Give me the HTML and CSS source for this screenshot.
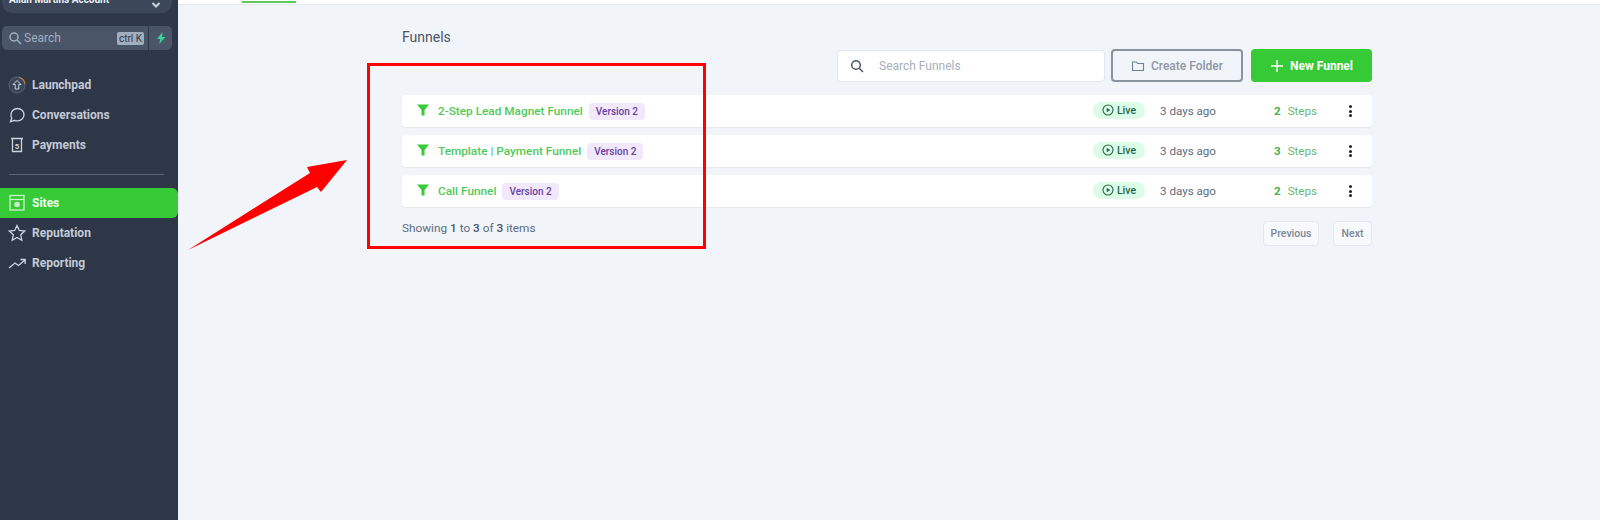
FILE: index.html
```html
<!DOCTYPE html>
<html lang="en">
<head>
<meta charset="utf-8">
<title>Funnels</title>
<link rel="stylesheet" href="styles.css">
</head>
<body>
<div class="app">
  <aside class="sidebar">
    <div class="account"><span class="account-name">Allan Martins Account</span>
      <svg class="chev" width="10" height="10" viewBox="0 0 10 10"><path d="M1.500 3 5 6.500 8.500 3" fill="none" stroke="#cbd5e0" stroke-width="2"/></svg>
    </div>
    <div class="search-row">
      <div class="side-search">
        <svg width="14" height="14" viewBox="0 0 14 14"><circle cx="6" cy="6" r="4" fill="none" stroke="#a0aec0" stroke-width="1.500"/><path d="m9 9 4 4" stroke="#a0aec0" stroke-width="1.500"/></svg>
        <span class="side-search-text">Search</span>
        <span class="kbd">ctrl K</span>
      </div>
      <div class="bolt"><svg width="14" height="14" viewBox="0 0 14 14"><path d="M8.500 1 3 8h3.200l-1 5L11.500 6H8z" fill="#34d399"/></svg></div>
    </div>
    <nav class="nav nav-top">
      <a class="nav-item"><svg width="24" height="24" viewBox="0 0 24 24"><circle cx="12" cy="12" r="8" fill="#3b4658" stroke="#56617a" stroke-width="1"/><path d="M14 4.300A8 8 0 0 1 20 11" fill="none" stroke="#c77a3f" stroke-width="1.200"/><path d="M12 7.500 8 11.500h2.200V16h3.600v-4.500H16z" fill="none" stroke="#cbd5e0" stroke-width="1"/></svg><span>Launchpad</span></a>
      <a class="nav-item"><svg width="24" height="24" viewBox="0 0 24 24"><path d="M12.500 5.500c3.600 0 6.500 2.800 6.500 6.200s-2.900 6.200-6.500 6.200c-1 0-2-.2-2.800-.6L5.500 18.800l1.200-3.600C6.200 14.100 6 12.900 6 11.700c0-3.400 2.900-6.200 6.500-6.200z" fill="none" stroke="#cbd5e0" stroke-width="1.300"/></svg><span>Conversations</span></a>
      <a class="nav-item"><svg width="24" height="24" viewBox="0 0 24 24"><path d="M6 5.500h12M7.500 5.500v13h9v-13" fill="none" stroke="#cbd5e0" stroke-width="1.300"/><text x="12" y="15.500" font-size="8" font-weight="700" text-anchor="middle" fill="#cbd5e0" font-family="Roboto, sans-serif">5</text></svg><span>Payments</span></a>
    </nav>
    <div class="divider"></div>
    <nav class="nav">
      <a class="nav-item active"><svg width="24" height="24" viewBox="0 0 24 24"><rect x="5" y="4.500" width="14" height="14.500" fill="none" stroke="#c9f2c9" stroke-width="1.300"/><path d="M5 8.500h14" stroke="#c9f2c9" stroke-width="1.300"/><circle cx="12" cy="13.500" r="2.800" fill="#c9f2c9"/></svg><span>Sites</span></a>
      <a class="nav-item"><svg width="24" height="24" viewBox="0 0 24 24"><path d="m12 4.500 2.300 5 5.400.6-4 3.700 1.100 5.400-4.800-2.700-4.800 2.700 1.100-5.400-4-3.700 5.400-.6z" fill="none" stroke="#cbd5e0" stroke-width="1.300"/></svg><span>Reputation</span></a>
      <a class="nav-item"><svg width="24" height="24" viewBox="0 0 24 24"><path d="m4 17 6-5 3.500 2.500L20 9M15.500 8.500H20.200V13" fill="none" stroke="#cbd5e0" stroke-width="1.300"/></svg><span>Reporting</span></a>
    </nav>
  </aside>
  <main class="main">
    <div class="topbar"><span class="tab-line"></span></div>
    <section class="content">
      <h1 class="title">Funnels</h1>
      <div class="toolbar">
        <div class="search">
          <svg width="14" height="14" viewBox="0 0 14 14"><circle cx="6" cy="6" r="4.300" fill="none" stroke="#4a5568" stroke-width="1.500"/><path d="m9.200 9.200 3.800 3.800" stroke="#4a5568" stroke-width="1.500"/></svg>
          <span>Search Funnels</span>
        </div>
        <button class="btn-folder"><svg width="14" height="14" viewBox="0 0 14 14"><path d="M1.500 3h4l1.200 1.500h5.800v7h-11z" fill="none" stroke="#718096" stroke-width="1.100"/></svg>Create Folder</button>
        <button class="btn-new"><svg width="14" height="14" viewBox="0 0 14 14"><path d="M7 1v12M1 7h12" stroke="#fff" stroke-width="1.500"/></svg>New Funnel</button>
      </div>
      <div class="rows">
        <div class="row">
          <svg class="funnel" width="14" height="14" viewBox="0 0 14 14"><path d="M1 1.500h12L8.500 7v5.500h-3V7z" fill="#37ca37"/></svg>
          <a class="name">2-Step Lead Magnet Funnel</a><span class="version">Version 2</span>
          <span class="live"><svg width="12" height="12" viewBox="0 0 12 12"><circle cx="6" cy="6" r="5" fill="none" stroke="#276749" stroke-width="1.100"/><path d="M4.700 3.800v4.400L8.200 6z" fill="#276749"/></svg>Live</span>
          <span class="date">3 days ago</span>
          <span class="steps"><b>2</b>Steps</span>
          <span class="dots"><i></i><i></i><i></i></span>
        </div>
        <div class="row">
          <svg class="funnel" width="14" height="14" viewBox="0 0 14 14"><path d="M1 1.500h12L8.500 7v5.500h-3V7z" fill="#37ca37"/></svg>
          <a class="name">Template | Payment Funnel</a><span class="version">Version 2</span>
          <span class="live"><svg width="12" height="12" viewBox="0 0 12 12"><circle cx="6" cy="6" r="5" fill="none" stroke="#276749" stroke-width="1.100"/><path d="M4.700 3.800v4.400L8.200 6z" fill="#276749"/></svg>Live</span>
          <span class="date">3 days ago</span>
          <span class="steps"><b>3</b>Steps</span>
          <span class="dots"><i></i><i></i><i></i></span>
        </div>
        <div class="row">
          <svg class="funnel" width="14" height="14" viewBox="0 0 14 14"><path d="M1 1.500h12L8.500 7v5.500h-3V7z" fill="#37ca37"/></svg>
          <a class="name">Call Funnel</a><span class="version">Version 2</span>
          <span class="live"><svg width="12" height="12" viewBox="0 0 12 12"><circle cx="6" cy="6" r="5" fill="none" stroke="#276749" stroke-width="1.100"/><path d="M4.700 3.800v4.400L8.200 6z" fill="#276749"/></svg>Live</span>
          <span class="date">3 days ago</span>
          <span class="steps"><b>2</b>Steps</span>
          <span class="dots"><i></i><i></i><i></i></span>
        </div>
      </div>
      <div class="foot">
        <span class="showing">Showing <b>1</b> to <b>3</b> of <b>3</b> items</span>
        <div class="pager"><button class="page page-prev">Previous</button><button class="page page-next">Next</button></div>
      </div>
    </section>
  </main>
</div>
<div class="callout-box"></div>
<svg class="callout-arrow" width="180" height="100" viewBox="0 0 180 100"><path d="M1 91 123 14l-3-6L160 1 134 33l-4-5z" fill="#ff0000"/></svg>
</body>
</html>
```
FILE: styles.css
```css
* { box-sizing: border-box; }
html, body { margin: 0; height: 100%; overflow: hidden; }
body { font-family: Roboto, "Liberation Sans", sans-serif; background: #f1f4f9; position: relative; }
.app { display: flex; height: 520px; }

.sidebar { width: 178px; flex: none; background: #2d3748; }
.account { height: 13px; margin: 0 6px 0 2px; background: #3c4759; border-radius: 0 0 10px 10px; display: flex; justify-content: space-between; padding: 0 11px 0 7px; }
.account-name { font-size: 10px; font-weight: 700; color: #edf2f7; line-height: 11px; margin-top: -6px; white-space: nowrap; }
.search-row { display: flex; margin: 13px 6px 0 2px; height: 24px; }
.side-search { flex: 1; background: #4a5568; border-radius: 5px 0 0 5px; display: flex; align-items: center; padding: 0 4px 0 6px; }
.side-search-text { font-size: 12px; color: #a0aec0; margin-left: 2px; flex: 1; }
.kbd { font-size: 10px; background: #a0aec0; color: #2d3748; border-radius: 2px; padding: 0 2px; height: 13px; line-height: 13px; }
.bolt { width: 23px; background: #4a5568; border-radius: 0 5px 5px 0; margin-left: 1px; display: flex; align-items: center; justify-content: center; }
.nav { display: flex; flex-direction: column; }
.nav-top { margin-top: 20px; }
.nav-item { height: 30px; display: flex; align-items: center; padding-left: 5px; font-size: 12px; font-weight: 700; color: #c3cad6; }
.nav-item svg { margin-right: 3px; flex: none; }
.nav-item.active { background: #37ca37; color: #f0fdf0; border-radius: 0 6px 6px 0; }
.divider { height: 1px; background: #5b6577; margin: 14px 14px 13px 9px; }

.main { flex: 1; min-width: 0; display: flex; flex-direction: column; }
.topbar { height: 5px; background: #fff; border-bottom: 1px solid #e2e8f0; flex: none; padding-left: 64px; }
.tab-line { display: block; width: 54px; height: 2px; background: #5fc95f; margin-top: 1px; }
.content { padding: 23px 0 0 224px; width: 1194px; }
.title { margin: 0; font-size: 14px; font-weight: 400; line-height: 18px; color: #4a5568; }
.toolbar { display: flex; justify-content: flex-end; align-items: center; height: 33px; margin-top: 3px; }
.search { width: 268px; height: 32px; background: #fff; border: 1px solid #e2e8f0; border-radius: 4px; display: flex; align-items: center; padding-left: 12px; font-size: 12px; color: #a6afbd; gap: 15px; }
.btn-folder { width: 132px; height: 33px; margin-left: 6px; background: transparent; border: 2px solid #8a929e; border-radius: 4px; display: flex; align-items: center; justify-content: center; gap: 6px; font: 500 12px Roboto, sans-serif; color: #8d97a6; padding: 0; }
.btn-new { width: 121px; height: 33px; margin-left: 8px; background: #37ca37; border: 0; border-radius: 4px; display: flex; align-items: center; justify-content: center; gap: 6px; font: 700 12px Roboto, sans-serif; color: #fff; padding: 0; }
.rows { display: flex; flex-direction: column; gap: 8px; margin-top: 13px; }
.row { height: 32px; background: #fff; border-radius: 4px; box-shadow: 0 1px 1px rgba(0,0,0,.05); display: flex; align-items: center; padding-left: 14px; }
.funnel { flex: none; margin: 0 8px 2px 0; }
.name { font-size: 11.800px; font-weight: 500; color: #4fc95a; white-space: nowrap; }
.version { margin-left: 6px; height: 17px; line-height: 17px; padding: 0 7px; border-radius: 4px; background: #f1e8fb; color: #6b3fa0; font-size: 10px; font-weight: 500; white-space: nowrap; }
.live { margin: 0 0 2px auto; width: 52px; height: 17px; border-radius: 9px; background: #dcfce7; color: #276749; font-size: 10.500px; font-weight: 500; display: flex; align-items: center; justify-content: center; gap: 3px; flex: none; }
.date { width: 129px; padding-left: 15px; font-size: 11.600px; color: #5f6b7c; flex: none; white-space: nowrap; }
.steps { width: 75px; font-size: 11.600px; color: #68b86f; flex: none; }
.steps b { color: #4caf50; margin-right: 7px; font-weight: 700; }
.dots { width: 23px; display: flex; flex-direction: column; align-items: flex-start; gap: 1.500px; flex: none; }
.dots i { width: 3px; height: 3px; border-radius: 50%; background: #1a202c; display: block; }
.foot { display: flex; justify-content: space-between; margin-top: 14px; }
.showing { font-size: 11.800px; color: #5f6b7c; }
.showing b { font-weight: 500; color: #4a5568; }
.pager { display: flex; gap: 14px; }
.page { height: 25px; padding: 0; background: #f7f9fc; border: 1px solid #e2e8f0; border-radius: 4px; font: 500 10.500px Roboto, sans-serif; color: #7d8795; }
.page-prev { width: 56px; }
.page-next { width: 39px; }

.callout-box { position: absolute; left: 367px; top: 63px; width: 339px; height: 186px; border: 3px solid #ff0000; }
.callout-arrow { position: absolute; left: 187px; top: 159px; }
```
